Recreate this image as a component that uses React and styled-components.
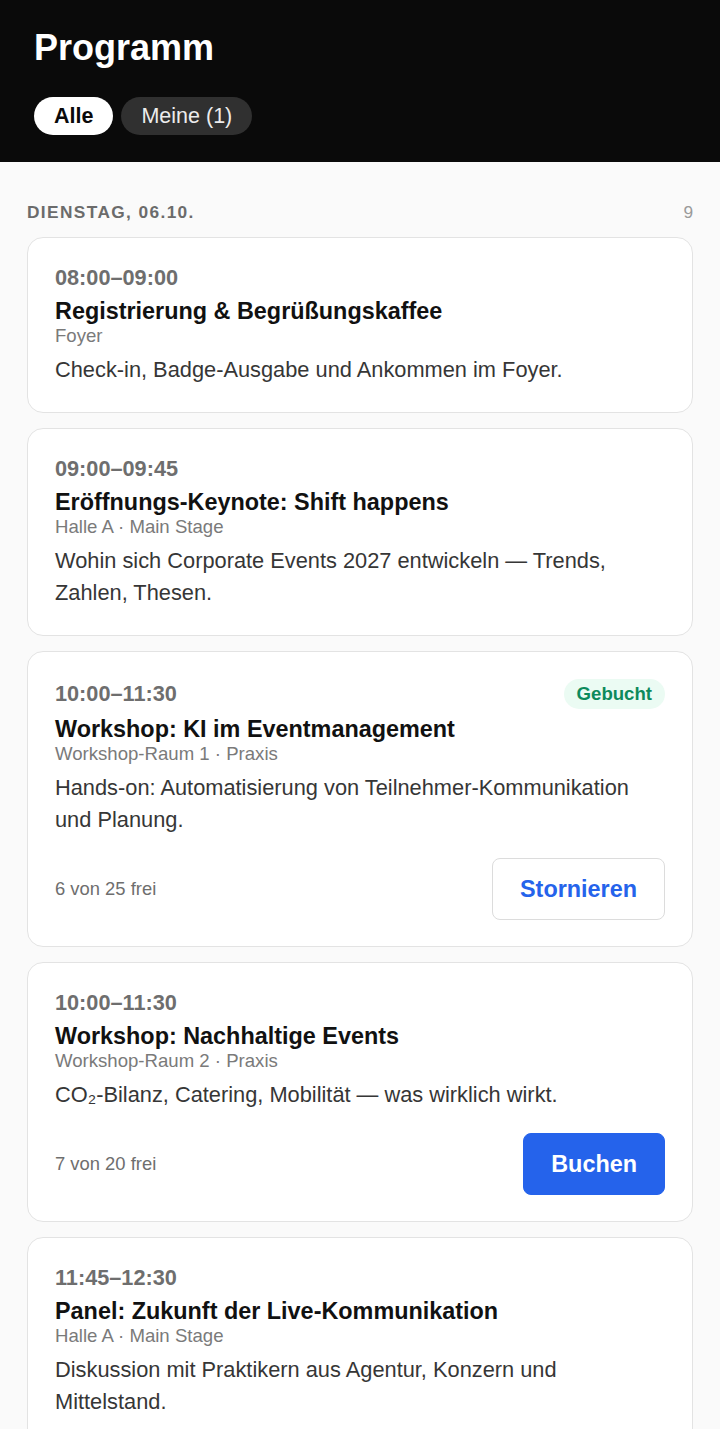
import styled, { createGlobalStyle } from 'styled-components';

const GlobalStyle = createGlobalStyle`
  * { box-sizing: border-box; }
  body {
    margin: 0;
    background: #fafafa;
    font-family: "Liberation Sans", Arial, sans-serif;
  }
`;

const sessions = [
  {
    time: '08:00–09:00',
    title: 'Registrierung & Begrüßungskaffee',
    place: 'Foyer',
    text: 'Check-in, Badge-Ausgabe und Ankommen im Foyer.',
  },
  {
    time: '09:00–09:45',
    title: 'Eröffnungs-Keynote: Shift happens',
    place: 'Halle A · Main Stage',
    text: 'Wohin sich Corporate Events 2027 entwickeln — Trends, Zahlen, Thesen.',
  },
  {
    time: '10:00–11:30',
    title: 'Workshop: KI im Eventmanagement',
    place: 'Workshop-Raum 1 · Praxis',
    text: 'Hands-on: Automatisierung von Teilnehmer-Kommunikation und Planung.',
    booked: true,
    seats: '6 von 25 frei',
  },
  {
    time: '10:00–11:30',
    title: 'Workshop: Nachhaltige Events',
    place: 'Workshop-Raum 2 · Praxis',
    text: 'CO₂-Bilanz, Catering, Mobilität — was wirklich wirkt.',
    booked: false,
    seats: '7 von 20 frei',
  },
  {
    time: '11:45–12:30',
    title: 'Panel: Zukunft der Live-Kommunikation',
    place: 'Halle A · Main Stage',
    text: 'Diskussion mit Praktikern aus Agentur, Konzern und Mittelstand.',
  },
];

// Kopfbereich
const Header = styled.header`
  background: #0a0a0a;
  padding: 26px 34px 27px;
`;

const PageTitle = styled.h1`
  margin: 0 0 27px;
  color: #fff;
  font-size: 36px;
  line-height: 44px;
  font-weight: 700;
`;

const Tabs = styled.div`
  display: flex;
  gap: 8px;
`;

const Tab = styled.button`
  height: 38px;
  padding: 0 20px;
  border: none;
  border-radius: 999px;
  font-family: inherit;
  font-size: 21.5px;
  font-weight: ${p => (p.$active ? 700 : 400)};
  background: ${p => (p.$active ? '#fff' : '#303030')};
  color: ${p => (p.$active ? '#0a0a0a' : '#ececec')};
`;

// Liste
const Main = styled.main`
  padding: 39px 27px 40px;
`;

const DayHead = styled.div`
  display: flex;
  justify-content: space-between;
  align-items: center;
  height: 22px;
  margin-bottom: 14px;
`;

const DayLabel = styled.h2`
  margin: 0;
  font-size: 17.3px;
  font-weight: 700;
  letter-spacing: 0.08em;
  text-transform: uppercase;
  color: #6b6b6b;
`;

const DayCount = styled.span`
  font-size: 17.3px;
  color: #9a9a9a;
`;

const List = styled.div`
  display: flex;
  flex-direction: column;
  gap: 15px;
`;

const Card = styled.article`
  background: #fff;
  border: 1px solid #e3e3e3;
  border-radius: 16px;
  padding: 27px 27px 26px;
`;

const TopRow = styled.div`
  display: flex;
  justify-content: space-between;
  align-items: center;
`;

const Time = styled.div`
  font-size: 21.7px;
  line-height: 26px;
  font-weight: 700;
  color: #6e6e6e;
`;

const Badge = styled.span`
  height: 30px;
  display: inline-flex;
  align-items: center;
  padding: 0 13px;
  border-radius: 999px;
  background: #ebfbf3;
  color: #0d8a5c;
  font-size: 18.6px;
  font-weight: 700;
`;

const Title = styled.h3`
  margin: 6px 0 0;
  font-size: 23.4px;
  line-height: 28px;
  font-weight: 700;
  color: #111;
`;

const Place = styled.div`
  font-size: 18.6px;
  line-height: 22px;
  color: #7a7a7a;
`;

const Description = styled.p`
  margin: 7px 0 0;
  font-size: 21.8px;
  line-height: 32px;
  color: #363636;
`;

const Footer = styled.div`
  display: flex;
  justify-content: space-between;
  align-items: center;
  margin-top: 22px;
`;

const Seats = styled.span`
  font-size: 18.4px;
  color: #6e6e6e;
`;

const ActionButton = styled.button`
  height: 62px;
  padding: 0 27px;
  border-radius: 8px;
  font-family: inherit;
  font-size: 23.4px;
  font-weight: 700;
  border: 1px solid ${p => (p.$primary ? '#2563eb' : '#dcdcdc')};
  background: ${p => (p.$primary ? '#2563eb' : '#fff')};
  color: ${p => (p.$primary ? '#fff' : '#2563eb')};
`;

const SessionCard = ({ s }) => (
  <Card>
    <TopRow>
      <Time>{s.time}</Time>
      {s.booked && <Badge>Gebucht</Badge>}
    </TopRow>
    <Title>{s.title}</Title>
    <Place>{s.place}</Place>
    <Description>{s.text}</Description>
    {s.seats && (
      <Footer>
        <Seats>{s.seats}</Seats>
        {s.booked ? (
          <ActionButton>Stornieren</ActionButton>
        ) : (
          <ActionButton $primary>Buchen</ActionButton>
        )}
      </Footer>
    )}
  </Card>
);

const App = () => (
  <>
    <GlobalStyle />
    <Header>
      <PageTitle>Programm</PageTitle>
      <Tabs>
        <Tab $active>Alle</Tab>
        <Tab>Meine (1)</Tab>
      </Tabs>
    </Header>
    <Main>
      <DayHead>
        <DayLabel>Dienstag, 06.10.</DayLabel>
        <DayCount>9</DayCount>
      </DayHead>
      <List>
        {sessions.map((s, i) => (
          <SessionCard key={i} s={s} />
        ))}
      </List>
    </Main>
  </>
);

export default App;
